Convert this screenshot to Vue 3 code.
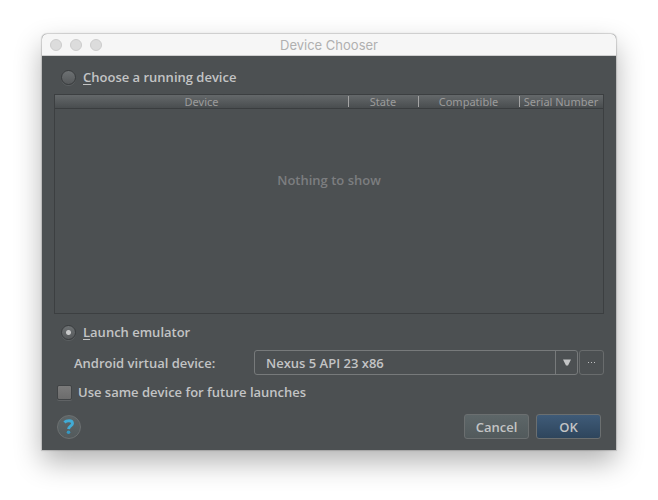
<script setup>
import { ref } from 'vue'

const mode = ref('emulator')
const device = ref('Nexus 5 API 23 x86')
const reuse = ref(false)
const columns = [
  { name: 'Device', cls: 'c-device' },
  { name: 'State', cls: 'c-state' },
  { name: 'Compatible', cls: 'c-compatible' },
  { name: 'Serial Number', cls: 'c-serial' },
]
</script>

<template>
  <main class="stage">
    <section class="window" aria-labelledby="window-title">
      <header class="titlebar">
        <div class="lights"><i></i><i></i><i></i></div>
        <h1 id="window-title">Device Chooser</h1>
      </header>
      <form class="content" @submit.prevent>
        <label class="radio-row">
          <input v-model="mode" type="radio" name="mode" value="running" />
          <span><u>C</u>hoose a running device</span>
        </label>

        <table class="devices">
          <thead>
            <tr>
              <th v-for="c in columns" :key="c.name" :class="c.cls" scope="col">{{ c.name }}</th>
            </tr>
          </thead>
          <tbody>
            <tr>
              <td colspan="4">Nothing to show</td>
            </tr>
          </tbody>
        </table>

        <label class="radio-row second">
          <input v-model="mode" type="radio" name="mode" value="emulator" />
          <span><u>L</u>aunch emulator</span>
        </label>

        <div class="avd">
          <label for="avd">Android virtual device:</label>
          <div class="combo">
            <select id="avd" v-model="device">
              <option>Nexus 5 API 23 x86</option>
            </select>
            <span class="arrow">
              <svg width="8" height="7" viewBox="0 0 8 7"><path d="M0 0.5H8L5 6.5H3Z" fill="#c4c5c6" /></svg>
            </span>
          </div>
          <button type="button" class="more" aria-label="Manage virtual devices">
            <svg width="7" height="1" viewBox="0 0 7 1" fill="#c0c1c2">
              <rect width="1" height="1" /><rect x="3" width="1" height="1" /><rect x="6" width="1" height="1" />
            </svg>
          </button>
        </div>

        <label class="check-row">
          <input v-model="reuse" type="checkbox" />
          <span>Use same device for future launches</span>
        </label>

        <footer class="actions">
          <button type="button" class="help" aria-label="Help">
            <svg width="12" height="16" viewBox="0 0 12 16" fill="none">
              <path d="M1.4 3.4C2.8 2 4.3 1.7 6 1.7C8.3 1.7 9.5 2.8 9.5 4.5C9.5 7 5.8 6.9 5.6 10.2" stroke="#41acd6" stroke-width="2.9" />
              <circle cx="5.5" cy="13.3" r="1.8" fill="#3499c4" />
            </svg>
          </button>
          <button type="button" class="btn">Cancel</button>
          <button type="submit" class="btn primary">OK</button>
        </footer>
      </form>
    </section>
  </main>
</template>

<style>
body {
  margin: 0;
  background: #fff;
}
</style>

<style scoped>
* {
  box-sizing: border-box;
}
.stage {
  min-height: 100vh;
  padding: 34px 42px 50px;
  overflow: hidden;
  font: 600 13px/18px "Open Sans", "Noto Sans", sans-serif;
  color: #c3c4c5;
}
.window {
  display: flex;
  flex-direction: column;
  min-height: calc(100vh - 84px);
  background: #4c5052;
  border-radius: 5px 5px 0 0;
  box-shadow: 0 0 1px 1px rgba(0, 0, 0, 0.16), 0 12px 28px rgba(0, 0, 0, 0.3);
}
.titlebar {
  display: grid;
  grid-template-columns: 1fr auto 1fr;
  align-items: center;
  height: 22px;
  padding: 0 8px;
  background: #f6f6f6;
  border-bottom: 1px solid #d0d0d0;
  border-radius: 5px 5px 0 0;
}
.lights {
  display: flex;
  gap: 8px;
}
.lights i {
  width: 12px;
  height: 12px;
  border: 1px solid #cdcdcd;
  border-radius: 50%;
  background: #dcdcdc;
}
h1 {
  margin: 0;
  font: 400 13px/20px Inter, sans-serif;
  color: #b0b0b0;
}
.content {
  flex: 1;
  display: flex;
  flex-direction: column;
  padding: 12px 12px 11px;
}
.radio-row {
  display: flex;
  align-items: center;
  gap: 7px;
  padding-left: 7px;
  height: 18px;
}
u {
  text-decoration: underline;
  text-underline-offset: 2px;
  text-decoration-thickness: 1px;
}
input {
  appearance: none;
  flex: none;
  margin: 0;
  width: 15px;
  height: 15px;
}
input[type="radio"] {
  border: 1px solid #393c3e;
  border-radius: 50%;
  background: linear-gradient(#6d7173, #56595b);
  box-shadow: 0 1px 0 #5b5f61;
}
input[type="radio"]:checked {
  background: radial-gradient(circle, #c8c9ca 0 2px, transparent 3px), linear-gradient(#6d7173, #56595b);
}
.devices {
  flex: 1;
  display: flex;
  flex-direction: column;
  margin-top: 8px;
  border: 1px solid #3c3f41;
  border-collapse: collapse;
}
thead tr {
  display: flex;
  height: 14px;
  background: linear-gradient(#64686a, #494d4f);
  border-bottom: 1px solid #3a3d3f;
}
th {
  position: relative;
  padding: 0;
  font: 400 11px/13px "Noto Sans", sans-serif;
  color: #9c9c9c;
  text-align: center;
  white-space: nowrap;
}
th:not(:first-child)::before {
  content: "";
  position: absolute;
  top: 1px;
  left: 0;
  width: 1px;
  height: 11px;
  background: #a4a4a4;
}
.c-device {
  flex: 1;
}
.c-state {
  width: 70px;
}
.c-compatible {
  width: 101px;
}
.c-serial {
  width: 84px;
}
tbody,
tbody tr {
  display: block;
}
td {
  display: block;
  padding: 62px 0 0;
  text-align: center;
  color: #7c7e80;
}
.second {
  margin-top: 9px;
}
.avd {
  display: flex;
  align-items: center;
  gap: 1px;
  margin-top: 9px;
  padding-left: 20px;
}
.avd label {
  width: 179px;
}
.combo {
  flex: 1;
  display: grid;
  grid-template-columns: 1fr 22px;
  height: 25px;
  border: 1px solid #777a7b;
  border-radius: 3px;
}
select {
  grid-area: 1 / 1 / 2 / 3;
  appearance: none;
  padding: 0 32px 0 11px;
  border: 0;
  background: transparent;
  font: inherit;
  color: inherit;
}
.arrow {
  grid-area: 1 / 2;
  display: grid;
  place-items: center;
  border-left: 1px solid #777a7b;
  pointer-events: none;
}
button {
  padding: 0;
  font: inherit;
  color: inherit;
}
.more {
  display: grid;
  place-items: center;
  width: 25px;
  height: 25px;
  border: 1px solid #696c6d;
  border-radius: 3px;
  background: none;
}
.check-row {
  display: flex;
  align-items: center;
  gap: 6px;
  height: 18px;
  margin-top: 8px;
  padding-left: 3px;
}
input[type="checkbox"] {
  border: 1px solid #414446;
  border-radius: 2px;
  background: linear-gradient(#7b7b7b, #6c6c6c);
  box-shadow: 0 1px 0 #606365;
}
.actions {
  display: flex;
  align-items: center;
  gap: 7px;
  margin-top: 13px;
  padding: 0 3px;
}
.help {
  display: grid;
  place-items: center;
  width: 24px;
  height: 24px;
  margin-right: auto;
  border: 1px solid #6c7071;
  border-radius: 50%;
  background: linear-gradient(#5e6668, #535a5c);
}
.btn {
  width: 65px;
  height: 25px;
  border: 1px solid #6b6f70;
  border-radius: 3px;
  background: linear-gradient(#5d6668, #525a5c);
}
.primary {
  background: linear-gradient(#3f5b78, #2e455c);
}
</style>
